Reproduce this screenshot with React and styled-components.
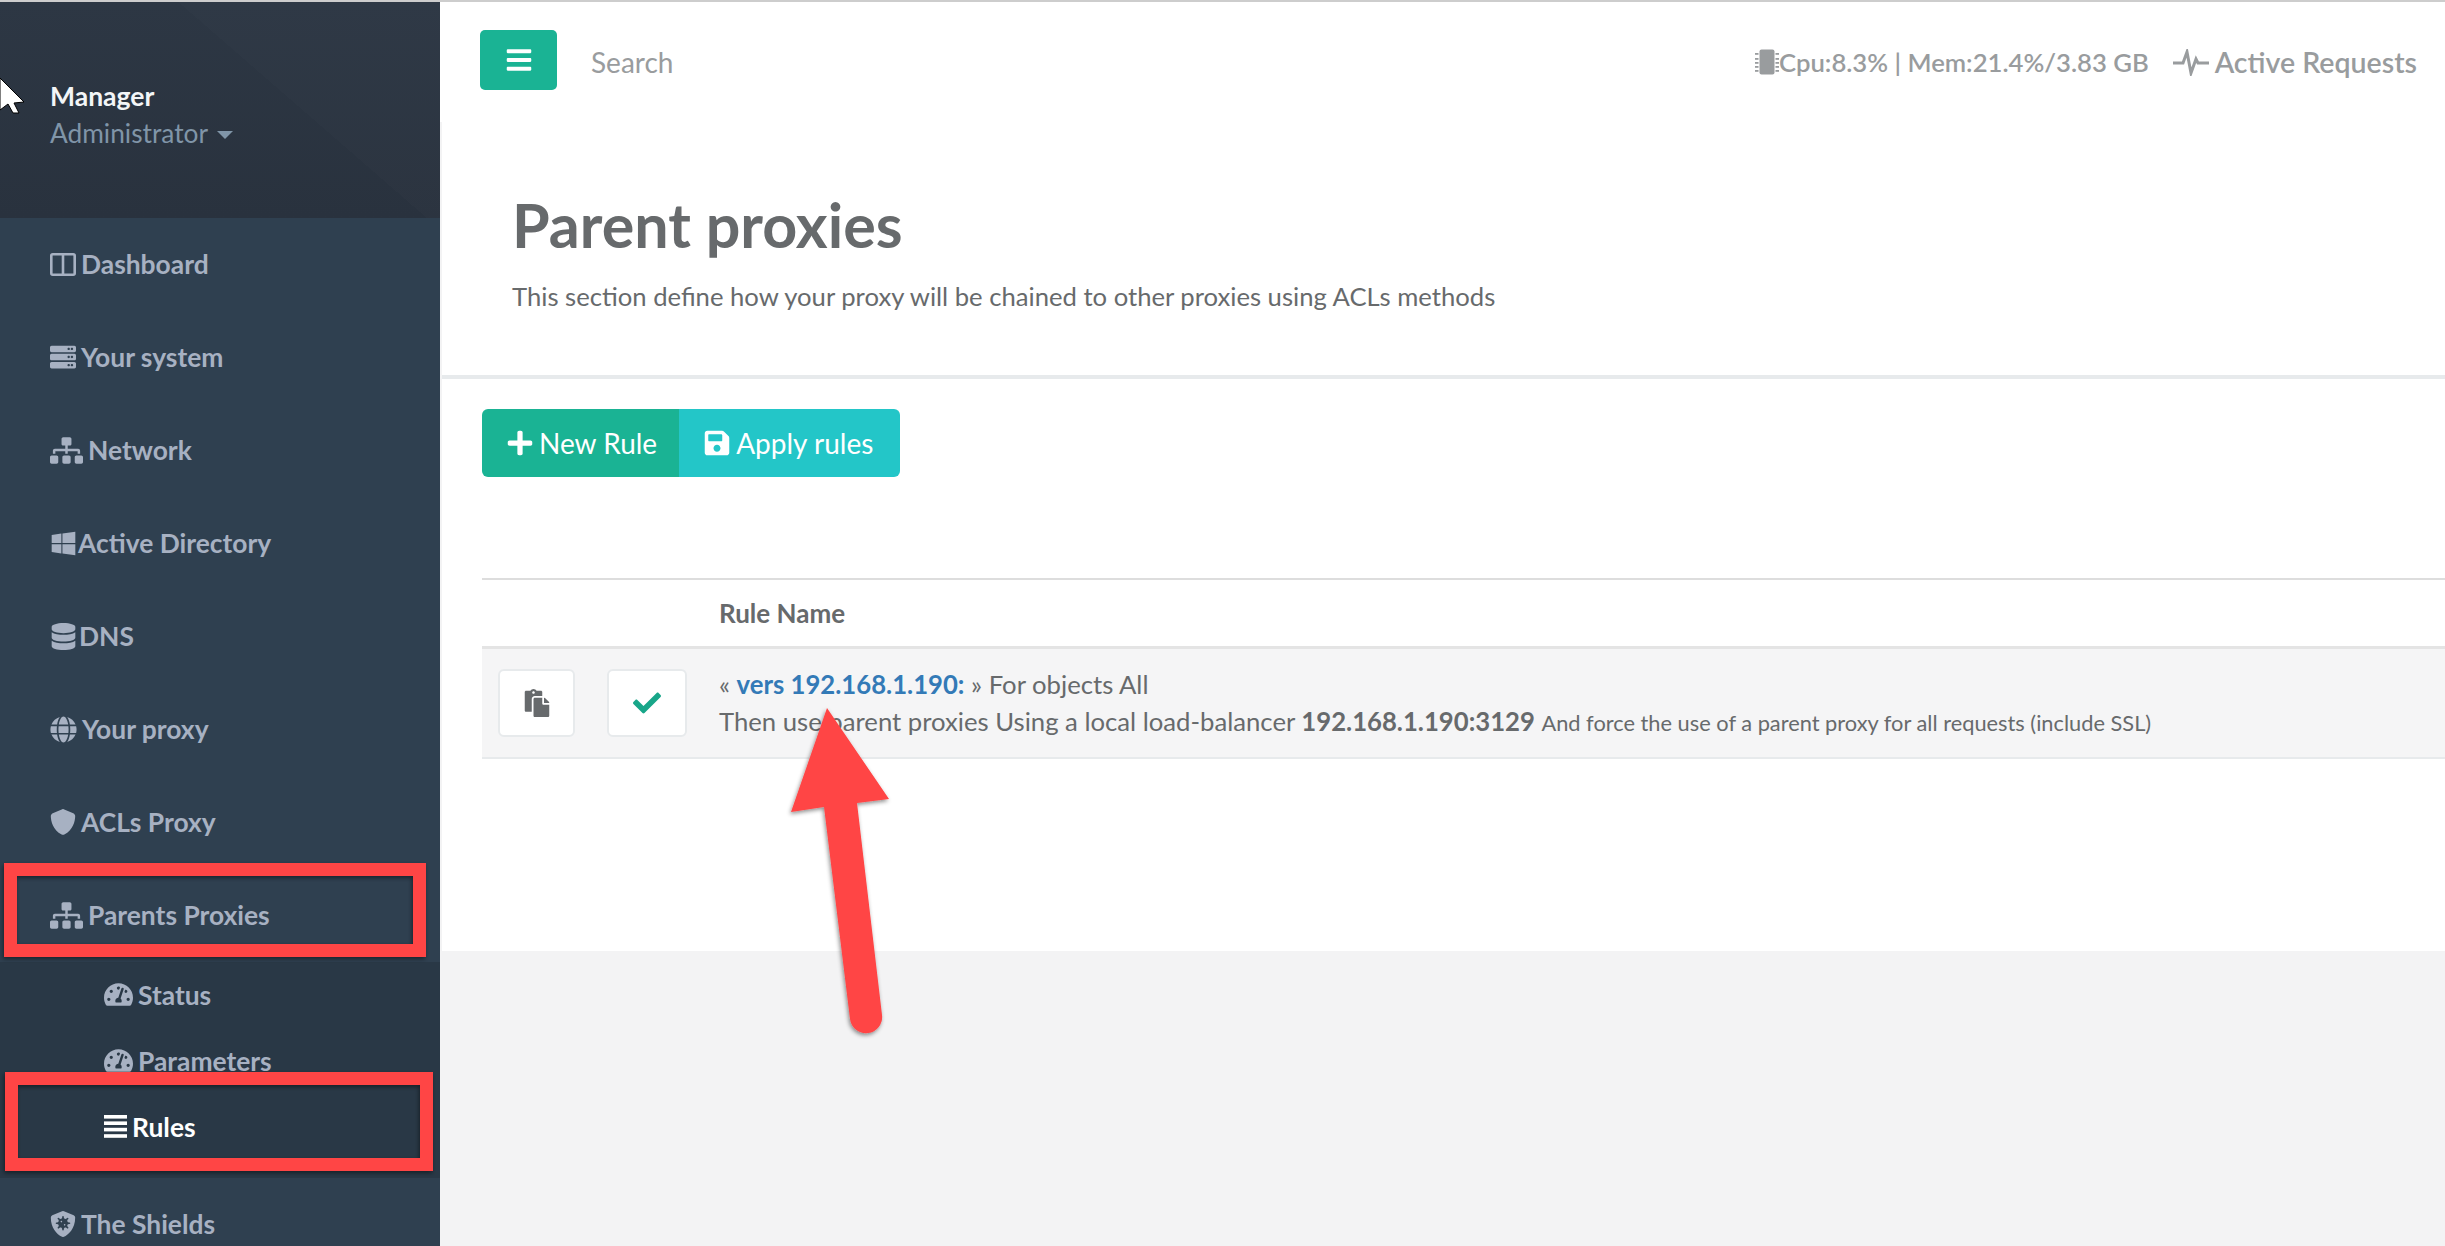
import React from "react";
import styled, { createGlobalStyle } from "styled-components";
import {
  FaServer, FaSitemap, FaWindows, FaDatabase, FaGlobe,
  FaShieldVirus, FaTachometerAlt, FaBars, FaPlus, FaSave, FaCheck, FaPaste,
} from "react-icons/fa";
import { FaShield } from "react-icons/fa6";

const GlobalStyle = createGlobalStyle`
  html, body { margin: 0; padding: 0; height: 100%; overflow: hidden; }
  body { font-family: Lato, "Open Sans", sans-serif; color: #676a6c; background: #f3f3f4; }
  * { box-sizing: border-box; }
`;

const Page = styled.div`
  position: relative;
  display: flex;
  width: 2445px;
  height: 1246px;
  overflow: hidden;
  border-top: 2px solid #cdcdcd;
`;

const Sidebar = styled.aside`
  flex: 0 0 440px;
  background: #2f4050;
`;

const Profile = styled.div`
  height: 216px;
  padding: 75px 0 0 50px;
  background:
    linear-gradient(41deg, transparent 0 62%, rgba(255,255,255,0.012) 62% 100%),
    linear-gradient(180deg, #2d3744, #29323e);
`;

const ProfileName = styled.div`
  font-size: 26.5px;
  line-height: 38px;
  font-weight: 700;
  color: #f3f5f7;
`;

const ProfileRole = styled.div`
  display: flex;
  align-items: center;
  gap: 9px;
  font-size: 26.3px;
  line-height: 36px;
  color: #8095a8;
`;

const Caret = styled.span`
  margin-top: 4px;
  border-left: 8px solid transparent;
  border-right: 8px solid transparent;
  border-top: 8px solid #8095a8;
`;

const MenuItem = styled.div`
  display: flex;
  align-items: center;
  gap: ${(p) => p.$gap ?? 5}px;
  height: 93px;
  padding: 0 0 1px 50px;
  font-size: 26.4px;
  font-weight: 700;
  color: #a7b1c2;
  svg { flex: none; font-size: ${(p) => p.$icon || 26}px; }
`;

const SubMenu = styled.div`
  height: 216px;
  background: #293846;
`;

const SubItem = styled.div`
  display: flex;
  align-items: center;
  gap: 5px;
  height: 66px;
  padding: 0 0 1px 104px;
  font-size: 26.4px;
  font-weight: 700;
  color: ${(p) => (p.$active ? "#fff" : "#a7b1c2")};
  svg { flex: none; font-size: 29px; }
`;

const Main = styled.main`
  flex: 1;
  min-width: 0;
  height: 949px;
  margin-left: 2px;
  background: #fff;
`;

const TopBar = styled.div`
  display: flex;
  align-items: center;
  height: 120px;
  margin-left: -2px;
  padding: 0 28px 0 40px;
  background: #fff;
`;

const MenuButton = styled.button`
  display: flex;
  align-items: center;
  justify-content: center;
  width: 77px;
  height: 60px;
  margin-bottom: 4px;
  border: 0;
  border-radius: 5px;
  background: #1ab394;
  color: #fff;
  font-size: 28px;
`;

const SearchText = styled.span`
  margin-left: 34px;
  font-size: 28px;
  color: #999c9e;
`;

const Stats = styled.div`
  display: flex;
  align-items: center;
  margin-left: auto;
  font-weight: 600;
  color: #999c9e;
`;

const StatGroup = styled.span`
  display: flex;
  align-items: center;
  gap: ${(p) => p.$inner}px;
  margin-left: ${(p) => p.$gap || 0}px;
  font-size: ${(p) => p.$size}px;
  svg { flex: none; }
`;

const TitleBlock = styled.section`
  height: 257px;
  padding: 70px 0 0 70px;
  border-bottom: 4px solid #e7eaec;
`;

const Title = styled.h1`
  margin: 0;
  font-size: 61px;
  line-height: 66px;
  font-weight: 700;
  color: #676a6c;
`;

const Subtitle = styled.p`
  margin: 20px 0 0;
  font-size: 25.65px;
  line-height: 36px;
  color: #676a6c;
`;

const Content = styled.section`
  padding: 30px 0 0 40px;
`;

const ButtonGroup = styled.div`
  display: flex;
  width: fit-content;
  height: 68px;
  border-radius: 6px;
  overflow: hidden;
`;

const ActionButton = styled.button`
  display: flex;
  align-items: center;
  gap: 5px;
  padding: 0 ${(p) => p.$right}px 0 24px;
  border: 0;
  font-family: inherit;
  font-size: 28px;
  color: #fff;
  background: ${(p) => p.$bg};
`;

const RuleTable = styled.div`
  margin-top: 101px;
  border-top: 2px solid #dddddd;
`;

const HeadRow = styled.div`
  display: flex;
  align-items: center;
  height: 69px;
  padding-left: 237px;
  border-bottom: 3px solid #e4e4e4;
  font-size: 26px;
  font-weight: 700;
`;

const BodyRow = styled.div`
  display: flex;
  align-items: center;
  height: 110px;
  padding-left: 16px;
  border-bottom: 2px solid #e7eaec;
  background: #f5f5f6;
`;

const RowButton = styled.div`
  display: flex;
  align-items: center;
  justify-content: center;
  width: ${(p) => p.$w}px;
  height: 68px;
  margin-right: ${(p) => p.$mr}px;
  border: 2px solid #e7eaec;
  border-radius: 6px;
  background: #fff;
  color: ${(p) => p.$color};
  font-size: 28px;
`;

const RuleText = styled.div`
  padding-top: 1px;
  font-size: 25.7px;
  line-height: 37px;
  white-space: nowrap;
`;

const RuleLink = styled.a`
  font-weight: 700;
  color: #337ab7;
`;

const Small = styled.span`
  font-size: 21.8px;
`;

const Overlay = styled.svg`
  position: absolute;
  left: 0;
  top: -2px;
  width: 2445px;
  height: 1246px;
  pointer-events: none;
`;

const ColumnsIcon = () => (
  <svg width="26" height="23" viewBox="0 0 26 23" fill="none" stroke="currentColor" strokeWidth="2.6">
    <rect x="1.3" y="1.3" width="23.4" height="20.4" rx="1.5" />
    <path d="M13 1.3v20.4" />
  </svg>
);

const RulesIcon = () => (
  <svg width="23" height="23" viewBox="0 0 23 23" fill="currentColor">
    <rect y="0" width="23" height="3.6" />
    <rect y="6.4" width="23" height="3.6" />
    <rect y="12.8" width="23" height="3.6" />
    <rect y="19.2" width="23" height="3.6" />
  </svg>
);

const ChipIcon = () => (
  <svg width="24" height="26" viewBox="0 0 24 26" fill="#999c9e">
    <rect x="4.5" y="0.5" width="15" height="25" rx="2" />
    {[4, 9, 13, 17, 21].map((y) => (
      <React.Fragment key={y}>
        <rect x="0" y={y} width="3.5" height="1.8" />
        <rect x="20.5" y={y} width="3.5" height="1.8" />
      </React.Fragment>
    ))}
  </svg>
);

const PulseIcon = () => (
  <svg width="36" height="27" viewBox="0 0 36 27" fill="none" stroke="#999c9e" strokeWidth="3">
    <path d="M0 14h10l4-11 4 21 5-14 2 4h11" />
  </svg>
);

const menuTop = [
  [ColumnsIcon, "Dashboard", 26],
  [FaServer, "Your system", 26],
  [FaSitemap, "Network", 33],
  [FaWindows, "Active Directory", 27, 1],
  [FaDatabase, "DNS", 27, 2],
  [FaGlobe, "Your proxy", 27],
  [FaShield, "ACLs Proxy", 26],
  [FaSitemap, "Parents Proxies", 33],
];

export default function App() {
  return (
    <Page>
      <GlobalStyle />
      <Sidebar>
        <Profile>
          <ProfileName>Manager</ProfileName>
          <ProfileRole>Administrator <Caret /></ProfileRole>
        </Profile>
        {menuTop.map(([Icon, label, size, gap]) => (
          <MenuItem key={label} $icon={size} $gap={gap}><Icon />{label}</MenuItem>
        ))}
        <SubMenu>
          <SubItem><FaTachometerAlt />Status</SubItem>
          <SubItem><FaTachometerAlt />Parameters</SubItem>
          <SubItem $active><RulesIcon />Rules</SubItem>
        </SubMenu>
        <MenuItem $icon={26}><FaShieldVirus />The Shields</MenuItem>
      </Sidebar>
      <Main>
        <TopBar>
          <MenuButton><FaBars /></MenuButton>
          <SearchText>Search</SearchText>
          <Stats>
            <StatGroup $size={25.7} $inner={0}><ChipIcon />Cpu:8.3% | Mem:21.4%/3.83 GB</StatGroup>
            <StatGroup $gap={24} $inner={6} $size={28.5}><PulseIcon />Active Requests</StatGroup>
          </Stats>
        </TopBar>
        <TitleBlock>
          <Title>Parent proxies</Title>
          <Subtitle>This section define how your proxy will be chained to other proxies using ACLs methods</Subtitle>
        </TitleBlock>
        <Content>
          <ButtonGroup>
            <ActionButton $bg="#1ab394" $right={22}><FaPlus size={28} />New Rule</ActionButton>
            <ActionButton $bg="#23c6c8" $right={27}><FaSave size={28} />Apply rules</ActionButton>
          </ButtonGroup>
          <RuleTable>
            <HeadRow>Rule Name</HeadRow>
            <BodyRow>
              <RowButton $w={77} $mr={32} $color="#676a6c"><FaPaste /></RowButton>
              <RowButton $w={80} $mr={32} $color="#18a689"><FaCheck /></RowButton>
              <RuleText>
                « <RuleLink>vers 192.168.1.190:</RuleLink> » For objects All
                <br />
                Then use parent proxies Using a local load-balancer <b>192.168.1.190:3129</b> <Small>And force the use of a parent proxy for all requests (include SSL)</Small>
              </RuleText>
            </BodyRow>
          </RuleTable>
        </Content>
      </Main>
      <Overlay viewBox="0 0 2445 1246">
        <defs>
          <filter id="shade" x="-10%" y="-10%" width="120%" height="120%">
            <feDropShadow dx="-1" dy="2" stdDeviation="2" floodColor="#000" floodOpacity="0.45" />
          </filter>
        </defs>
        <g filter="url(#shade)" fill="none" stroke="#ff4444" strokeWidth="13">
          <rect x="10.5" y="869.5" width="409" height="81" />
          <rect x="11.5" y="1078.5" width="415" height="86" />
        </g>
        <g filter="url(#shade)" fill="#ff4444">
          <path d="M827 708 L889 799 L857 803 L882 1015 A16 16 0 0 1 850 1019 L824 807 L791 812 Z" />
        </g>
        <path d="M0 78 L24 102 L14 103 L19 113 L13 113 L8 104 L0 110 Z" fill="#fff" stroke="#000" strokeWidth="1" />
      </Overlay>
    </Page>
  );
}
